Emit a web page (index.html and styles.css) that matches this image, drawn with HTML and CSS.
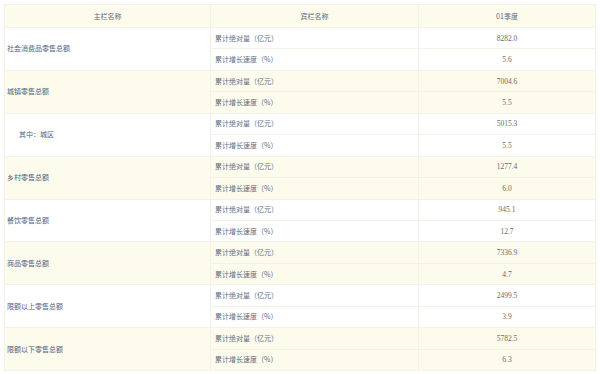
FILE: index.html
```html
<!DOCTYPE html>
<html lang="zh-CN">
<head>
<meta charset="utf-8">
<link rel="stylesheet" href="styles.css">
</head>
<body>
<table class="stats">
  <thead>
    <tr class="head">
      <th class="c1">主栏名称</th>
      <th class="c2">宾栏名称</th>
      <th class="c3">01季度</th>
    </tr>
  </thead>
  <tbody class="grp">
    <tr><td class="main" rowspan="2">社会消费品零售总额</td><td class="sub">累计绝对量（亿元）</td><td class="num">8282.0</td></tr>
    <tr><td class="sub">累计增长速度（%）</td><td class="num">5.6</td></tr>
  </tbody>
  <tbody class="grp alt">
    <tr><td class="main" rowspan="2">城镇零售总额</td><td class="sub">累计绝对量（亿元）</td><td class="num">7004.6</td></tr>
    <tr><td class="sub">累计增长速度（%）</td><td class="num">5.5</td></tr>
  </tbody>
  <tbody class="grp">
    <tr><td class="main indent" rowspan="2">其中：城区</td><td class="sub">累计绝对量（亿元）</td><td class="num">5015.3</td></tr>
    <tr><td class="sub">累计增长速度（%）</td><td class="num">5.5</td></tr>
  </tbody>
  <tbody class="grp alt">
    <tr><td class="main" rowspan="2">乡村零售总额</td><td class="sub">累计绝对量（亿元）</td><td class="num">1277.4</td></tr>
    <tr><td class="sub">累计增长速度（%）</td><td class="num">6.0</td></tr>
  </tbody>
  <tbody class="grp">
    <tr><td class="main" rowspan="2">餐饮零售总额</td><td class="sub">累计绝对量（亿元）</td><td class="num">945.1</td></tr>
    <tr><td class="sub">累计增长速度（%）</td><td class="num">12.7</td></tr>
  </tbody>
  <tbody class="grp alt">
    <tr><td class="main" rowspan="2">商品零售总额</td><td class="sub">累计绝对量（亿元）</td><td class="num">7336.9</td></tr>
    <tr><td class="sub">累计增长速度（%）</td><td class="num">4.7</td></tr>
  </tbody>
  <tbody class="grp">
    <tr><td class="main" rowspan="2">限额以上零售总额</td><td class="sub">累计绝对量（亿元）</td><td class="num">2499.5</td></tr>
    <tr><td class="sub">累计增长速度（%）</td><td class="num">3.9</td></tr>
  </tbody>
  <tbody class="grp alt">
    <tr><td class="main" rowspan="2">限额以下零售总额</td><td class="sub">累计绝对量（亿元）</td><td class="num">5782.5</td></tr>
    <tr><td class="sub">累计增长速度（%）</td><td class="num">6.3</td></tr>
  </tbody>
</table>
</body>
</html>
```
FILE: styles.css
```css
html, body {
  margin: 0;
  padding: 0;
  background: #ffffff;
}
body {
  padding: 4px 4px 0 4px;
}
.stats {
  width: 592px;
  border-collapse: collapse;
  table-layout: fixed;
  font-family: "Noto Sans CJK SC", "Liberation Serif", serif;
  font-size: 7px;
  color: #56657f;
}
.stats th, .stats td {
  border: 1px solid #f2f1ea;
  padding: 0;
  line-height: 9px;
  vertical-align: middle;
}
.head th {
  height: 22px;
  background: #fdfbeb;
  font-weight: normal;
  text-align: center;
  color: #5a6886;
}
.c1 { width: 205px; }
.c2 { width: 207px; }
.c3 { width: auto; }
.grp td { height: 20.45px; }
.alt td { background: #fdfbeb; }
.main {
  text-align: left;
  padding-left: 2px !important;
  color: #4f6081;
}
.main.indent {
  padding-left: 14px !important;
}
.sub {
  text-align: left;
  padding-left: 4px !important;
  color: #5e6b83;
}
.num {
  text-align: center;
  font-family: "Liberation Serif", serif;
  font-size: 7.5px;
  color: #6a6a6a;
}
```
